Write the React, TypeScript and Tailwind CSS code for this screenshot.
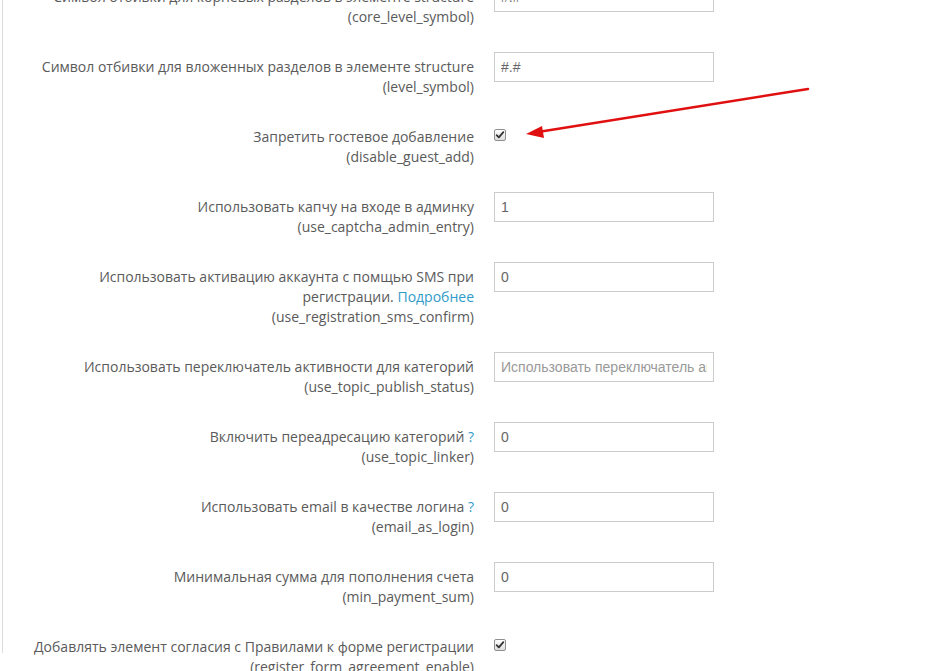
import React from "react";

type Row = {
  label: React.ReactNode;
  name: string;
  kind: "text" | "check";
  value?: string;
  placeholder?: string;
};

const Help = () => <span className="text-[#2f9bc9]"> ?</span>;

const rows: Row[] = [
  { label: "Символ отбивки для корневых разделов в элементе structure", name: "core_level_symbol", kind: "text", value: "#.#" },
  { label: "Символ отбивки для вложенных разделов в элементе structure", name: "level_symbol", kind: "text", value: "#.#" },
  { label: "Запретить гостевое добавление", name: "disable_guest_add", kind: "check" },
  { label: "Использовать капчу на входе в админку", name: "use_captcha_admin_entry", kind: "text", value: "1" },
  {
    label: (
      <>
        Использовать активацию аккаунта с помщью SMS при регистрации.{" "}
        <a className="text-[#2f9bc9]">Подробнее</a>
      </>
    ),
    name: "use_registration_sms_confirm",
    kind: "text",
    value: "0",
  },
  {
    label: "Использовать переключатель активности для категорий",
    name: "use_topic_publish_status",
    kind: "text",
    placeholder: "Использовать переключатель активности для категорий",
  },
  { label: <>Включить переадресацию категорий<Help /></>, name: "use_topic_linker", kind: "text", value: "0" },
  { label: <>Использовать email в качестве логина<Help /></>, name: "email_as_login", kind: "text", value: "0" },
  { label: "Минимальная сумма для пополнения счета", name: "min_payment_sum", kind: "text", value: "0" },
  { label: "Добавлять элемент согласия с Правилами к форме регистрации", name: "register_form_agreement_enable", kind: "check" },
];

function Checkbox() {
  return (
    <span className="mt-[7px] flex h-[12px] w-[12px] items-center justify-center rounded-[2px] border border-[#8f8f8f] bg-gradient-to-b from-white to-[#dcdcdc]">
      <svg viewBox="0 0 12 12" className="h-[10px] w-[10px]">
        <path d="M2 6.2 L4.6 8.8 L10 2.6" fill="none" stroke="#333" strokeWidth={2.2} strokeLinecap="round" strokeLinejoin="round" />
      </svg>
    </span>
  );
}

export default function App() {
  return (
    <div className="relative h-[671px] w-[952px] overflow-hidden bg-white" style={{ fontFamily: '"Open Sans", sans-serif' }}>
      <div className="ml-[2px] h-full border-l border-[#dcdcdc]">
        <div className="mt-[-18px] flex flex-col gap-[25px]">
          {rows.map((r) => (
            <div key={r.name} className="flex items-start">
              <label className="ml-[20px] w-[451px] pt-[5px] text-right text-[14px] leading-[20px] text-[#5a5a5a]">
                {r.label}
                <br />({r.name})
              </label>
              <div className="ml-[20px]">
                {r.kind === "check" ? (
                  <Checkbox />
                ) : (
                  <input
                    readOnly
                    defaultValue={r.value}
                    placeholder={r.placeholder}
                    className="h-[30px] w-[220px] border border-[#cccccc] bg-white px-[6px] text-[14px] text-[#666] placeholder:text-[#999] outline-none"
                    style={{ fontFamily: '"Liberation Sans", Arial, sans-serif' }}
                  />
                )}
              </div>
            </div>
          ))}
        </div>
      </div>

      {/* annotation arrow */}
      <svg className="pointer-events-none absolute left-0 top-0" width="952" height="671">
        <line x1="808" y1="89" x2="538" y2="132" stroke="#e01010" strokeWidth="2.5" strokeLinecap="round" />
        <polygon points="526,134 542,126 544,138" fill="#e01010" />
      </svg>
    </div>
  );
}
